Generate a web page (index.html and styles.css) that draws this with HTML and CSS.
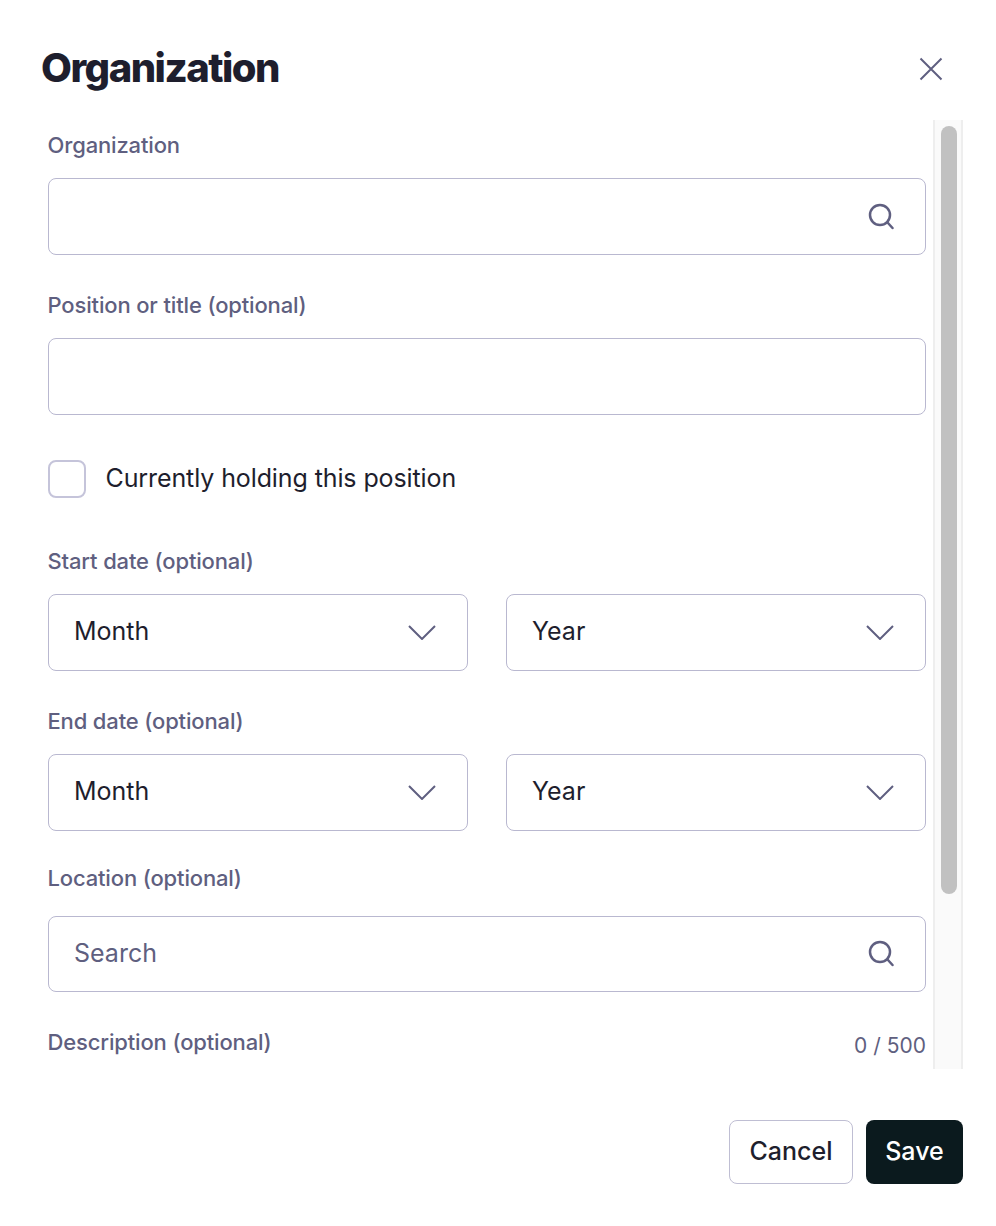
FILE: index.html
```html
<!DOCTYPE html>
<html lang="en">
<head>
<meta charset="utf-8">
<title>Organization</title>
<link rel="stylesheet" href="styles.css">
</head>
<body>
<main class="modal">
  <header class="header">
    <h1 class="title">Organization</h1>
    <button class="close" aria-label="Close">
      <svg width="24" height="24" viewBox="0 0 24 24"><path class="ico" d="M1.5 1.5l21 21M22.5 1.5l-21 21"/></svg>
    </button>
  </header>
  <div class="body">
    <form class="form">
      <label class="label">Organization</label>
      <div class="input">
        <svg class="icon" width="28" height="28" viewBox="0 0 28 28"><circle class="ico2" cx="14" cy="12" r="10"/><path class="ico2" d="M21.5 19.5L26.5 25"/></svg>
      </div>
      <label class="label gap">Position or title (optional)</label>
      <div class="input"></div>
      <div class="check-row">
        <span class="checkbox"></span>
        <span class="check-text">Currently holding this position</span>
      </div>
      <label class="label gap-start">Start date (optional)</label>
      <div class="pair">
        <div class="input select"><span class="value">Month</span><svg class="chev" width="28" height="16" viewBox="0 0 28 16"><path class="ico" d="M1 2l13 13L27 2"/></svg></div>
        <div class="input select"><span class="value">Year</span><svg class="chev" width="28" height="16" viewBox="0 0 28 16"><path class="ico" d="M1 2l13 13L27 2"/></svg></div>
      </div>
      <label class="label gap">End date (optional)</label>
      <div class="pair">
        <div class="input select"><span class="value">Month</span><svg class="chev" width="28" height="16" viewBox="0 0 28 16"><path class="ico" d="M1 2l13 13L27 2"/></svg></div>
        <div class="input select"><span class="value">Year</span><svg class="chev" width="28" height="16" viewBox="0 0 28 16"><path class="ico" d="M1 2l13 13L27 2"/></svg></div>
      </div>
      <label class="label gap-loc">Location (optional)</label>
      <div class="input short">
        <span class="placeholder">Search</span>
        <svg class="icon" width="28" height="28" viewBox="0 0 28 28"><circle class="ico2" cx="14" cy="12" r="10"/><path class="ico2" d="M21.5 19.5L26.5 25"/></svg>
      </div>
      <div class="desc-row">
        <label class="label">Description (optional)</label>
        <span class="count">0 / 500</span>
      </div>
    </form>
    <div class="scrollbar"><div class="thumb"></div></div>
  </div>
  <footer class="footer">
    <button class="btn cancel">Cancel</button>
    <button class="btn save">Save</button>
  </footer>
</main>
</body>
</html>
```

FILE: styles.css
```css
* { box-sizing: border-box; }
html, body { margin: 0; padding: 0; background: #fff; }
body { font-family: Inter, "Liberation Sans", sans-serif; color: #1e1e2d; }
.modal { width: 996px; height: 1226px; padding: 0 33px 0 40px; display: flex; flex-direction: column; }
.header { height: 120px; display: flex; align-items: center; justify-content: space-between; padding: 18px 20px 0 1px; }
.title { margin: 0 0 2px; font-size: 40px; line-height: 48px; font-weight: 800; letter-spacing: -1.5px; color: #1e1e2d; }
.close { border: 0; background: none; padding: 0; width: 24px; height: 24px; display: block; }
.close svg { display: block; }
.ico { fill: none; stroke: #5f5f80; stroke-width: 2; }
.ico2 { fill: none; stroke: #5f5f80; stroke-width: 2.5; stroke-linecap: round; }
.body { height: 949px; display: flex; overflow: hidden; }
.form { width: 886px; padding: 10px 0 0 8px; }
.label { display: block; font-size: 22px; line-height: 30px; font-weight: 500; color: #5f5f80; margin-bottom: 18px; margin-left: -0.5px; letter-spacing: -0.15px; }
.gap { margin-top: 35px; }
.gap-start { margin-top: 48px; }
.gap-loc { margin-top: 32px; margin-bottom: 23px; }
.input { height: 77px; border: 1px solid #b9b8d0; border-radius: 8px; background: #fff; display: flex; align-items: center; justify-content: flex-end; padding: 0 31px 0 25px; }
.input.short { height: 76px; justify-content: space-between; }
.select { justify-content: space-between; padding-right: 31px; }
.chev { margin-top: -1px; }
.value { font-size: 25px; line-height: 30px; margin-top: -4px; color: #1e1e2d; }
.placeholder { font-size: 25px; line-height: 30px; margin-top: -2px; color: #5f5f80; }
.check-row { margin-top: 45px; display: flex; align-items: center; gap: 20px; }
.checkbox { width: 38px; height: 38px; border: 2px solid #c5c4da; border-radius: 8px; background: #fff; }
.check-text { font-size: 25px; line-height: 36px; margin-bottom: 2px; color: #1e1e2d; letter-spacing: -0.1px; margin-left: -0.5px; }
.pair { display: grid; grid-template-columns: 420px 420px; column-gap: 38px; }
.desc-row { margin-top: 35px; display: flex; justify-content: space-between; }
.desc-row .label { margin-bottom: 0; }
.count { font-size: 21px; line-height: 38px; color: #5f5f80; }
.scrollbar { width: 30px; margin-left: 7px; height: 949px; background: #fafafa; border-left: 2px solid #eee; border-right: 2px solid #eee; padding: 6px 6px 0; }
.thumb { width: 16px; height: 768px; background: #c1c1c1; border-radius: 8px; }
.footer { height: 157px; display: flex; justify-content: flex-end; gap: 13px; padding-top: 51px; }
.btn { height: 64px; border-radius: 8px; font-family: inherit; font-size: 25px; font-weight: 500; padding: 0 0 2px; }
.cancel { width: 124px; background: #fff; color: #1e1e2d; border: 1px solid #bfbed3; }
.save { width: 97px; background: #0b1a1e; color: #fff; border: 0; }
```
